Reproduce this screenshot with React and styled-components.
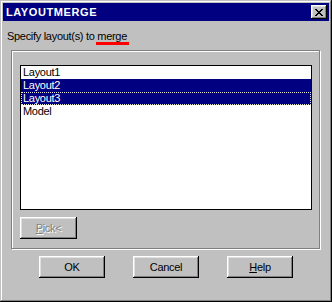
import React from 'react';
import styled, { createGlobalStyle } from 'styled-components';

const Global = createGlobalStyle`
  html, body { margin: 0; padding: 0; background: #c0c0c0; }
  body { font-family: "Liberation Sans", Arial, sans-serif; font-size: 11px; color: #000; letter-spacing: -0.3px; }
  * { box-sizing: border-box; }
`;

const Window = styled.div`
  width: 332px;
  height: 302px;
  background: #c0c0c0;
  padding: 3px;
  display: flex;
  flex-direction: column;
  box-shadow: inset -1px -1px 0 #000, inset 1px 1px 0 #c0c0c0,
    inset -2px -2px 0 #808080, inset 2px 2px 0 #fff;
`;

const TitleBar = styled.div`
  height: 18px;
  background: #000080;
  color: #fff;
  display: flex;
  align-items: center;
  justify-content: space-between;
  padding: 0 2px 0 3px;
`;

const Title = styled.span`
  font-weight: bold;
  font-size: 11px;
  letter-spacing: 0.6px;
  line-height: 18px;
`;

const CloseButton = styled.div`
  width: 16px;
  height: 14px;
  background: #c0c0c0;
  display: flex;
  align-items: center;
  justify-content: center;
  box-shadow: inset -1px -1px 0 #000, inset 1px 1px 0 #fff,
    inset -2px -2px 0 #808080, inset 2px 2px 0 #dfdfdf;
`;

const Body = styled.div`
  display: flex;
  flex-direction: column;
`;

const Label = styled.div`
  margin: 9px 0 0 4px;
  line-height: 13px;
  white-space: nowrap;
`;

const Marked = styled.span`
  position: relative;
  &::after {
    content: '';
    position: absolute;
    left: -1px;
    right: -2px;
    top: 100%;
    height: 3px;
    background: #ff0000;
  }
`;

const GroupBox = styled.div`
  margin: 7px 0 0 8px;
  width: 309px;
  height: 199px;
  border: 1px solid #808080;
  box-shadow: inset 1px 1px 0 #fff, 1px 1px 0 #fff;
  padding: 14px 0 0 8px;
  display: flex;
  flex-direction: column;
  align-items: flex-start;
`;

const ListBox = styled.div`
  width: 292px;
  height: 145px;
  border: 1px solid #000;
  background: #fff;
  display: flex;
  flex-direction: column;
`;

const Item = styled.div`
  position: relative;
  height: 13px;
  line-height: 13px;
  padding-left: 2px;
  white-space: nowrap;
  background: ${(p) => (p.$selected ? '#000080' : 'transparent')};
  color: ${(p) => (p.$selected ? '#fff' : '#000')};
  &::after {
    content: '';
    display: ${(p) => (p.$focused ? 'block' : 'none')};
    position: absolute;
    inset: 0;
    border: 1px dotted #e8e8d0;
  }
`;

const Button = styled.div`
  width: ${(p) => p.$w || 66}px;
  height: 22px;
  background: #c0c0c0;
  display: flex;
  align-items: center;
  justify-content: center;
  line-height: 13px;
  color: ${(p) => (p.$disabled ? '#808080' : '#000')};
  text-shadow: ${(p) => (p.$disabled ? '1px 1px 0 #fff' : 'none')};
  box-shadow: inset -1px -1px 0 #000, inset 1px 1px 0 #fff,
    inset -2px -2px 0 #808080, inset 2px 2px 0 #dfdfdf;
  u { text-decoration: underline; text-underline-offset: 1px; }
`;

const PickButton = styled(Button)`
  margin-top: 7px;
`;

const Footer = styled.div`
  margin-top: 7px;
  display: flex;
  justify-content: center;
  gap: 28px;
`;

const CloseX = () => (
  <svg width="8" height="7" viewBox="0 0 8 7" shapeRendering="crispEdges">
    <path
      fill="#000"
      d="M0 0h2v1H0zM6 0h2v1H6zM1 1h2v1H1zM5 1h2v1H5zM2 2h4v1H2zM3 3h2v1H3zM2 4h4v1H2zM1 5h2v1H1zM5 5h2v1H5zM0 6h2v1H0zM6 6h2v1H6z"
    />
  </svg>
);

const items = [
  { name: 'Layout1' },
  { name: 'Layout2', selected: true },
  { name: 'Layout3', selected: true, focused: true },
  { name: 'Model' },
];

export default function App() {
  return (
    <>
      <Global />
      <Window>
        <TitleBar>
          <Title>LAYOUTMERGE</Title>
          <CloseButton>
            <CloseX />
          </CloseButton>
        </TitleBar>
        <Body>
          <Label>
            Specify layout(s) to <Marked>merge</Marked>
          </Label>
          <GroupBox>
            <ListBox>
              {items.map((it) => (
                <Item key={it.name} $selected={it.selected} $focused={it.focused}>
                  {it.name}
                </Item>
              ))}
            </ListBox>
            <PickButton $w={57} $disabled>
              <span><u>P</u>ick&lt;</span>
            </PickButton>
          </GroupBox>
          <Footer>
            <Button>OK</Button>
            <Button>Cancel</Button>
            <Button>
              <span><u>H</u>elp</span>
            </Button>
          </Footer>
        </Body>
      </Window>
    </>
  );
}
